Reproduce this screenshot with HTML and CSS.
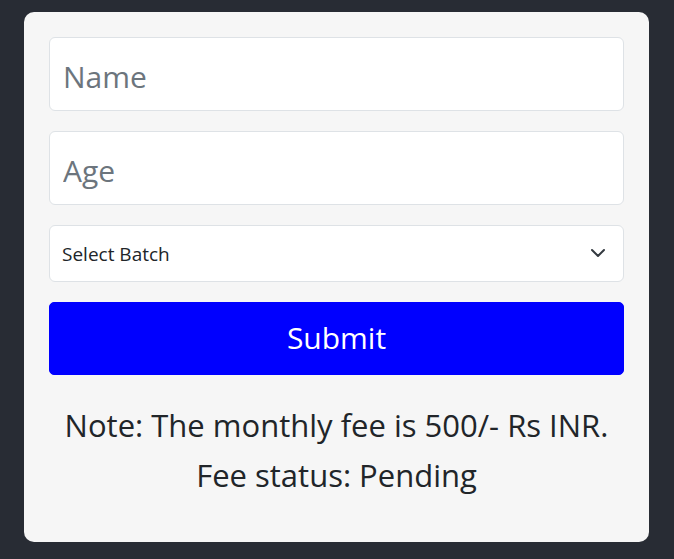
FILE: index.html
```html
<!DOCTYPE html>
<html lang="en">
<head>
<meta charset="utf-8">
<title>Fee Form</title>
<link rel="stylesheet" href="styles.css">
</head>
<body>
<main class="card">
  <form class="form">
    <input class="field" type="text" placeholder="Name">
    <input class="field" type="text" placeholder="Age">
    <div class="select-wrap">
      <select class="select">
        <option>Select Batch</option>
        <option>6-7 AM</option>
        <option>7-8 AM</option>
        <option>8-9 AM</option>
        <option>5-6 PM</option>
      </select>
      <svg class="chevron" width="16" height="10" viewBox="0 0 16 10" aria-hidden="true">
        <polyline points="2,2 8,8 14,2" fill="none" stroke="#343a40" stroke-width="2" stroke-linecap="round" stroke-linejoin="round"/>
      </svg>
    </div>
    <button class="submit" type="button">Submit</button>
  </form>
  <div class="notes">
    <p class="note">Note: The monthly fee is 500/- Rs INR.</p>
    <p class="note">Fee status: Pending</p>
  </div>
</main>
</body>
</html>
```
FILE: styles.css
```css
html, body {
  margin: 0;
  padding: 0;
}

body {
  background: #282c34;
  font-family: "Open Sans", "Noto Sans", sans-serif;
  color: #212529;
  min-height: 559px;
  padding-top: 12px;
  box-sizing: border-box;
}

.card {
  box-sizing: border-box;
  width: 625px;
  margin: 0 25px 0 24px;
  background: #f6f6f6;
  border-radius: 10px;
  padding: 25px 25px 42px;
}

.form {
  display: flex;
  flex-direction: column;
  gap: 20px;
}

.field {
  box-sizing: border-box;
  display: block;
  width: 100%;
  height: 74px;
  margin: 0;
  padding: 5px 13px 0;
  font-family: inherit;
  font-size: 30px;
  color: #212529;
  background: #fff;
  border: 1px solid #dee2e6;
  border-radius: 6px;
  outline: none;
}

.field::placeholder {
  color: #6c757d;
  opacity: 1;
}

.select-wrap {
  position: relative;
}

.select {
  box-sizing: border-box;
  display: block;
  width: 100%;
  height: 57px;
  margin: 0;
  padding: 15px 48px 13px 12px;
  line-height: 27px;
  font-family: inherit;
  font-size: 19px;
  color: #212529;
  background: #fff;
  border: 1px solid #dee2e6;
  border-radius: 6px;
  appearance: none;
  -webkit-appearance: none;
  outline: none;
}

.chevron {
  position: absolute;
  right: 18px;
  top: 23px;
  pointer-events: none;
}

.submit {
  box-sizing: border-box;
  display: block;
  width: 100%;
  height: 73px;
  margin: 0;
  padding: 12px 12px 14px;
  line-height: 45px;
  font-family: inherit;
  font-size: 30px;
  color: #fff;
  background: #0000ff;
  border: 1px solid #0000ff;
  border-radius: 5px;
  cursor: pointer;
}

.notes {
  margin-top: 25px;
  text-align: center;
}

.note {
  margin: 0;
  font-size: 31px;
  line-height: 50px;
}
```
